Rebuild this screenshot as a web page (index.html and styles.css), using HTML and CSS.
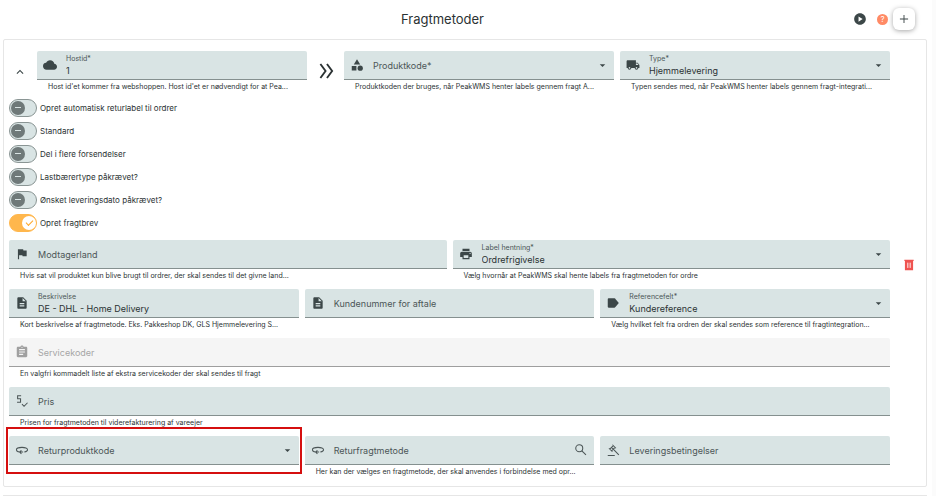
FILE: index.html
```
<!DOCTYPE html>
<html lang="da">
<head>
    <meta charset="utf-8">
    <title>Fragtmetoder</title>
    <link rel="stylesheet" href="styles.css">
</head>
<body>

<header class="page-header">
    <h1>Fragtmetoder</h1>
    <div class="actions">
        <button class="icon-button" aria-label="Afspil video">
            <svg class="icon" viewBox="0 0 24 24"><path d="M12 2C6.500 2 2 6.500 2 12s4.500 10 10 10 10-4.500 10-10S17.500 2 12 2zM9.500 16.500v-9l7 4.500z"/></svg>
        </button>
        <button class="icon-button help" aria-label="Hjælp">?</button>
        <button class="add-button" aria-label="Tilføj">
            <svg class="icon" viewBox="0 0 24 24"><path d="M19 12.800h-6.200V19h-1.600v-6.200H5v-1.600h6.200V5h1.600v6.200H19z"/></svg>
        </button>
    </div>
</header>

<main>
<section class="card">
    <div class="card-content">

        <div class="row row-top">
            <button class="icon-button collapse" aria-label="Skjul">
                <svg class="icon" viewBox="0 0 24 24"><path d="M12 8l-6 6 1.400 1.400 4.600-4.600 4.600 4.600L18 14z"/></svg>
            </button>
            <div class="field">
                <div class="field-box">
                    <svg class="icon" viewBox="0 0 24 24"><path d="M19.350 10.040A7.490 7.490 0 0 0 12 4C9.110 4 6.600 5.640 5.350 8.040A5.994 5.994 0 0 0 0 14c0 3.310 2.690 6 6 6h13c2.760 0 5-2.240 5-5 0-2.640-2.050-4.780-4.650-4.960z"/></svg>
                    <div class="field-body">
                        <label for="hostId">Hostid*</label>
                        <input type="text" id="hostId" value="1">
                    </div>
                </div>
                <p class="hint">Host id'et kommer fra webshoppen. Host id'et er nødvendigt for at Pea...</p>
            </div>
            <svg class="double-arrow" viewBox="0 0 16 18"><path d="M1.500 1.500L7 9l-5.500 7.500M8.500 1.500L14 9l-5.500 7.500"/></svg>
            <div class="field">
                <div class="field-box">
                    <svg class="icon" viewBox="0 0 24 24"><path d="M12 2l-5.500 9h11zM3 13.500h8v8H3z"/><circle cx="17.500" cy="17.500" r="4.500"/></svg>
                    <div class="field-body empty">
                        <label for="productCode">Produktkode*</label>
                        <select id="productCode"><option></option></select>
                    </div>
                    <svg class="icon arrow" viewBox="0 0 24 24"><path d="M6 9l6 6 6-6z"/></svg>
                </div>
                <p class="hint">Produktkoden der bruges, når PeakWMS henter labels gennem fragt A...</p>
            </div>
            <div class="field field-type">
                <div class="field-box">
                    <svg class="icon" viewBox="0 0 24 24"><path d="M20 8h-3V4H3c-1.100 0-2 .9-2 2v11h2c0 1.660 1.340 3 3 3s3-1.340 3-3h6c0 1.660 1.340 3 3 3s3-1.340 3-3h2v-5l-3-4zM6 18.500c-.83 0-1.500-.67-1.500-1.500s.67-1.500 1.500-1.500 1.500.67 1.500 1.500-.67 1.500-1.500 1.500zm13.500-9l1.960 2.500H17V9.500h2.500zm-1.500 9c-.83 0-1.500-.67-1.500-1.500s.67-1.500 1.500-1.500 1.500.67 1.500 1.500-.67 1.500-1.500 1.500z"/></svg>
                    <div class="field-body">
                        <label for="type">Type*</label>
                        <select id="type"><option>Hjemmelevering</option></select>
                    </div>
                    <svg class="icon arrow" viewBox="0 0 24 24"><path d="M6 9l6 6 6-6z"/></svg>
                </div>
                <p class="hint">Typen sendes med, når PeakWMS henter labels gennem fragt-integrati...</p>
            </div>
        </div>

        <div class="toggles">
            <label class="toggle"><input type="checkbox">Opret automatisk returlabel til ordrer</label>
            <label class="toggle"><input type="checkbox">Standard</label>
            <label class="toggle"><input type="checkbox">Del i flere forsendelser</label>
            <label class="toggle"><input type="checkbox">Lastbærertype påkrævet?</label>
            <label class="toggle"><input type="checkbox">Ønsket leveringsdato påkrævet?</label>
            <label class="toggle"><input type="checkbox" checked>Opret fragtbrev</label>
        </div>

        <div class="rows">
            <div class="row">
                <div class="field">
                    <div class="field-box">
                        <svg class="icon" viewBox="0 0 24 24"><path d="M14.400 6L14 4H5v17h2v-7h5.600l.4 2h7V6z"/></svg>
                        <div class="field-body empty">
                            <label for="country">Modtagerland</label>
                            <input type="text" id="country">
                        </div>
                    </div>
                    <p class="hint">Hvis sat vil produktet kun blive brugt til ordrer, der skal sendes til det givne land...</p>
                </div>
                <div class="field">
                    <div class="field-box">
                        <svg class="icon" viewBox="0 0 24 24"><path d="M19 8H5c-1.660 0-3 1.340-3 3v6h4v4h12v-4h4v-6c0-1.660-1.340-3-3-3zm-3 11H8v-5h8v5zm3-7c-.55 0-1-.45-1-1s.45-1 1-1 1 .45 1 1-.45 1-1 1zm-1-9H6v4h12V3z"/></svg>
                        <div class="field-body">
                            <label for="labelFetch">Label hentning*</label>
                            <select id="labelFetch"><option>Ordrefrigivelse</option></select>
                        </div>
                        <svg class="icon arrow" viewBox="0 0 24 24"><path d="M6 9l6 6 6-6z"/></svg>
                    </div>
                    <p class="hint">Vælg hvornår at PeakWMS skal hente labels fra fragtmetoden for ordre</p>
                </div>
            </div>

            <div class="row">
                <div class="field">
                    <div class="field-box">
                        <svg class="icon" viewBox="0 0 24 24"><path d="M14 2H6c-1.100 0-2 .9-2 2v16c0 1.100.89 2 2 2h12c1.100 0 2-.9 2-2V8l-6-6zm2 16H8v-2h8v2zm0-4H8v-2h8v2zm-3-5V3.500L18.500 9H13z"/></svg>
                        <div class="field-body">
                            <label for="description">Beskrivelse</label>
                            <input type="text" id="description" value="DE - DHL - Home Delivery">
                        </div>
                    </div>
                    <p class="hint">Kort beskrivelse af fragtmetode. Eks. Pakkeshop DK, GLS Hjemmelevering S...</p>
                </div>
                <div class="field">
                    <div class="field-box">
                        <svg class="icon" viewBox="0 0 24 24"><path d="M14 2H6c-1.100 0-2 .9-2 2v16c0 1.100.89 2 2 2h12c1.100 0 2-.9 2-2V8l-6-6zm2 16H8v-2h8v2zm0-4H8v-2h8v2zm-3-5V3.500L18.500 9H13z"/></svg>
                        <div class="field-body empty">
                            <label for="customerNumber">Kundenummer for aftale</label>
                            <input type="text" id="customerNumber">
                        </div>
                    </div>
                </div>
                <div class="field">
                    <div class="field-box">
                        <svg class="icon" viewBox="0 0 24 24"><path d="M16.500 5.500C16 4.700 15.500 4 14.500 4H4.500C3.500 4 3 4.700 3 5.500v13c0 .8.500 1.500 1.500 1.500h10c1 0 1.500-.7 2-1.500L22 12z"/></svg>
                        <div class="field-body">
                            <label for="reference">Referencefelt*</label>
                            <select id="reference"><option>Kundereference</option></select>
                        </div>
                        <svg class="icon arrow" viewBox="0 0 24 24"><path d="M6 9l6 6 6-6z"/></svg>
                    </div>
                    <p class="hint">Vælg hvilket felt fra ordren der skal sendes som reference til fragtintegration...</p>
                </div>
            </div>

            <div class="row">
                <div class="field disabled">
                    <div class="field-box">
                        <svg class="icon" viewBox="0 0 24 24"><path d="M19 3h-4.180C14.400 1.840 13.300 1 12 1s-2.400.84-2.820 2H5c-1.100 0-2 .9-2 2v14c0 1.100.9 2 2 2h14c1.100 0 2-.9 2-2V5c0-1.100-.9-2-2-2zm-7 0c.55 0 1 .45 1 1s-.45 1-1 1-1-.45-1-1 .45-1 1-1zm2 14H7v-2h7v2zm3-4H7v-2h10v2zm0-4H7V7h10v2z"/></svg>
                        <div class="field-body empty">
                            <label for="serviceCodes">Servicekoder</label>
                            <input type="text" id="serviceCodes" disabled>
                        </div>
                    </div>
                    <p class="hint">En valgfri kommadelt liste af ekstra servicekoder der skal sendes til fragt</p>
                </div>
            </div>

            <div class="row">
                <div class="field">
                    <div class="field-box">
                        <svg class="icon line" viewBox="0 0 24 24"><path d="M10.500 3H4.500v5h5v6h-6M12 17.500l3.500 3.500 6-6"/></svg>
                        <div class="field-body empty">
                            <label for="price">Pris</label>
                            <input type="text" id="price">
                        </div>
                    </div>
                    <p class="hint">Prisen for fragtmetoden til viderefakturering af vareejer</p>
                </div>
            </div>

            <div class="row">
                <div class="field highlighted">
                    <div class="field-box">
                        <svg class="icon line" viewBox="0 0 24 24"><path d="M8 15.500C4.500 15 2.500 13.500 2.500 11.500c0-2.500 4-4 9.500-4s9.500 1.500 9.500 4c0 2-2 3.300-5.500 4M14 15.500H8M11 12.500l-3 3 3 3"/></svg>
                        <div class="field-body empty">
                            <label for="returnCode">Returproduktkode</label>
                            <select id="returnCode"><option></option></select>
                        </div>
                        <svg class="icon arrow" viewBox="0 0 24 24"><path d="M6 9l6 6 6-6z"/></svg>
                    </div>
                </div>
                <div class="field">
                    <div class="field-box">
                        <svg class="icon line" viewBox="0 0 24 24"><path d="M8 15.500C4.500 15 2.500 13.500 2.500 11.500c0-2.500 4-4 9.500-4s9.500 1.500 9.500 4c0 2-2 3.300-5.500 4M14 15.500H8M11 12.500l-3 3 3 3"/></svg>
                        <div class="field-body empty">
                            <label for="returnMethod">Returfragtmetode</label>
                            <input type="text" id="returnMethod">
                        </div>
                        <button class="icon-button" aria-label="Søg">
                            <svg class="icon line" viewBox="0 0 24 24"><circle cx="9" cy="9" r="6"/><path d="M13.500 13.500l7 7"/></svg>
                        </button>
                    </div>
                    <p class="hint">Her kan der vælges en fragtmetode, der skal anvendes i forbindelse med opr...</p>
                </div>
                <div class="field">
                    <div class="field-box">
                        <svg class="icon line" viewBox="0 0 24 24"><path d="M3 21.500h12M5 9l6 6M11 3l6 6M6.500 10.500l6-6M9.500 13.500l6-6M9.500 7.500L22 20.500"/></svg>
                        <div class="field-body empty">
                            <label for="terms">Leveringsbetingelser</label>
                            <input type="text" id="terms">
                        </div>
                    </div>
                </div>
            </div>
        </div>
    </div>

    <button class="icon-button delete" aria-label="Slet">
        <svg class="icon" viewBox="0 0 24 24"><path d="M4 3h16v2H4zM5 4h14v17H5z"/><path class="bars" d="M10 8v9M14 8v9"/></svg>
    </button>
</section>

<section class="card next"></section>
</main>

</body>
</html>
```
FILE: styles.css
```
* {
    box-sizing: border-box;
}
body {
    margin: 0;
    font-family: Inter, "Liberation Sans", sans-serif;
    color: #2b3233;
    background: #fff;
    border-right: 4px solid #fbfbfb;
}
button, input, select {
    font-family: inherit;
    color: inherit;
    padding: 0;
    margin: 0;
    border: 0;
    background: none;
}
.icon {
    display: block;
    flex: none;
    width: 14px;
    height: 14px;
    fill: #3c4748;
}
.line {
    fill: none;
    stroke: #4c5657;
    stroke-width: 1.8;
}
.icon-button {
    flex: none;
    display: flex;
    align-items: center;
    justify-content: center;
}

/* Header */
.page-header {
    display: flex;
    align-items: center;
    height: 39px;
    padding: 0 17px 1px 32px;
}
h1 {
    flex: 1;
    margin: 0;
    font-size: 13px;
    font-weight: 400;
    text-align: center;
}
.actions {
    display: flex;
    align-items: center;
}
.help {
    width: 11px;
    height: 11px;
    margin: 0 5px 0 10px;
    border-radius: 50%;
    background: #ff8a65;
    color: #fff;
    font-size: 8px;
}
.add-button {
    display: flex;
    align-items: center;
    justify-content: center;
    width: 22px;
    height: 22px;
    border-radius: 6px;
    background: #fff;
    box-shadow: 0 1px 5px rgba(0, 0, 0, 0.35);
}

/* Card */
.card {
    display: flex;
    align-items: center;
    margin: 0 5px 8px 3px;
    padding: 11px 10px 8px 5px;
    border: 1px solid #e6e6e6;
    border-radius: 2px;
}
.card-content {
    flex: 1;
    min-width: 0;
}
.next {
    margin-bottom: 0;
    padding: 0;
    border-bottom: 0;
}
.delete {
    width: 14px;
    margin-left: 12px;
}
.delete .icon {
    fill: #ef5350;
}
.bars {
    stroke: #fff;
    stroke-width: 1.6;
}

/* Fields */
.rows {
    display: grid;
    gap: 7px;
}
.row {
    display: flex;
    align-items: flex-start;
    gap: 6px;
}
.row-top {
    gap: 0;
}
.field {
    position: relative;
    flex: 1;
    min-width: 0;
}
.field-type {
    margin-left: 6px;
}
.collapse {
    width: 28px;
    height: 42px;
    padding-right: 6px;
}
.double-arrow {
    flex: none;
    width: 15px;
    height: 18px;
    margin: 11px 10px 0 12px;
    fill: none;
    stroke: #2b3233;
    stroke-width: 2;
}
.field-box {
    display: flex;
    align-items: center;
    gap: 9px;
    height: 29px;
    padding: 0 6px;
    background: #d9e4e4;
    border-bottom: 1px solid #85908f;
    border-radius: 2px 2px 0 0;
}
.field-body {
    display: grid;
    flex: 1;
    min-width: 0;
}
.field-body label {
    font-size: 7px;
    line-height: 10px;
    color: #4c5657;
}
.field-body input,
.field-body select {
    appearance: none;
    width: 100%;
    height: 13px;
    font-size: 9px;
    line-height: 13px;
    outline: none;
}
.empty > * {
    grid-area: 1 / 1;
}
.field-body.empty label {
    font-size: 9px;
    line-height: 13px;
}
.disabled .field-box {
    background: #f5f5f5;
    border-color: #9e9e9e;
}
.disabled .field-body label {
    color: #a6a6a6;
}
.disabled .icon {
    fill: #a0a0a0;
}
.arrow {
    width: 11px;
    height: 11px;
}
.hint {
    height: 13px;
    margin: 0;
    padding-left: 11px;
    font-size: 7px;
    line-height: 13px;
    white-space: nowrap;
}
.highlighted::after {
    content: "";
    position: absolute;
    inset: -9px -3px;
    border: 2px solid #d50f0f;
    pointer-events: none;
}

/* Toggles */
.toggles {
    margin: 3px 0 6px;
}
.toggle {
    display: flex;
    align-items: center;
    gap: 3px;
    height: 23px;
    font-size: 8px;
}
.toggle input {
    appearance: none;
    position: relative;
    width: 28px;
    height: 18px;
    border: 1px solid #8a9594;
    border-radius: 9px;
    background: #d9e4e4;
}
.toggle input::before {
    content: "";
    position: absolute;
    top: 1px;
    left: 1px;
    width: 14px;
    height: 14px;
    border-radius: 50%;
    background: #6f7979;
}
.toggle input::after {
    content: "";
    position: absolute;
    top: 7px;
    left: 5px;
    width: 6px;
    height: 1px;
    background: #d9e4e4;
}
.toggle input:checked {
    border-color: #ffb74d;
    background: #ffb74d;
}
.toggle input:checked::before {
    left: 12px;
    background: #fff;
}
.toggle input:checked::after {
    top: 5px;
    left: 16px;
    width: 6px;
    height: 3px;
    background: none;
    border: solid #ffa726;
    border-width: 0 0 1px 1px;
    transform: rotate(-45deg);
}
```
